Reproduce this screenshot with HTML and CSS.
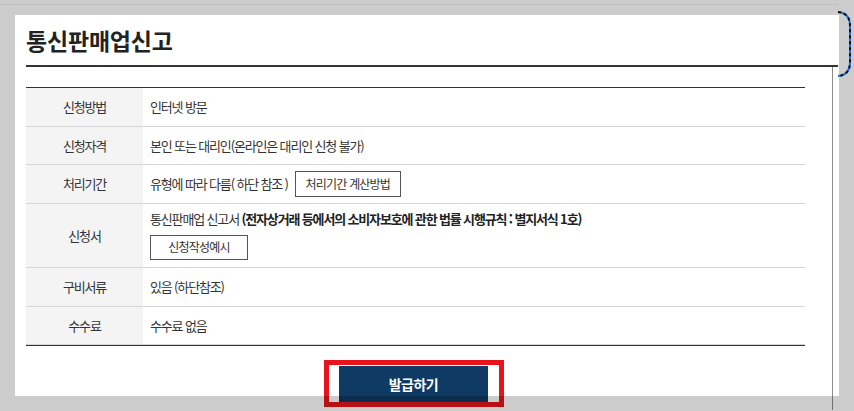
FILE: index.html
```html
<!DOCTYPE html>
<html lang="ko">
<head>
<meta charset="utf-8">
<title>통신판매업신고</title>
<link rel="stylesheet" href="styles.css">
</head>
<body>
<div class="topbar"></div>
<div class="page">
  <header class="head">
    <h1 class="title">통신판매업신고</h1>
  </header>
  <div class="sheet">
    <div class="info">
      <div class="row"><div class="th">신청방법</div><div class="td">인터넷 방문</div></div>
      <div class="row"><div class="th">신청자격</div><div class="td">본인 또는 대리인(온라인은 대리인 신청 불가)</div></div>
      <div class="row"><div class="th">처리기간</div><div class="td">유형에 따라 다름( 하단 참조 ) <button class="btn-outline btn-calc">처리기간 계산방법</button></div></div>
      <div class="row tall"><div class="th">신청서</div><div class="td stack"><p class="line">통신판매업 신고서 <strong>(전자상거래 등에서의 소비자보호에 관한 법률 시행규칙 : 별지서식 1호)</strong></p><button class="btn-outline btn-example">신청작성예시</button></div></div>
      <div class="row"><div class="th">구비서류</div><div class="td">있음 (하단참조)</div></div>
      <div class="row"><div class="th">수수료</div><div class="td">수수료 없음</div></div>
    </div>
    <div class="actions"><button class="btn-issue">발급하기</button></div>
  </div>
</div>
<div class="mark"></div>
<div class="spot"></div>
<svg class="focus-ring" width="20" height="72" viewBox="0 0 20 72">
  <path d="M2 2 Q14 3 14 16 L14 52 Q14 65 2 66" fill="none" stroke="#1f6fd8" stroke-width="2"/>
  <path d="M2 2 Q14 3 14 16 L14 52 Q14 65 2 66" fill="none" stroke="#111" stroke-width="2" stroke-dasharray="3 3"/>
</svg>
</body>
</html>
```
FILE: styles.css
```css
* { box-sizing: border-box; }
html, body { margin: 0; padding: 0; }
body {
  width: 854px;
  height: 411px;
  overflow: hidden;
  background: #fff;
  font-family: "Noto Sans CJK KR", "Noto Sans", sans-serif;
  color: #333;
}
.topbar {
  width: 838px;
  height: 5px;
  border-bottom: 1px solid #f2f2f2;
}
.head {
  margin-left: 26px;
  width: 812px;
  height: 62px;
  padding-top: 10px;
  display: flex;
  align-items: center;
  border-bottom: 2px solid #333;
}
.title {
  margin: 0;
  font-size: 23px;
  font-weight: 700;
  letter-spacing: -0.2px;
  color: #222;
  line-height: 30px;
}
.sheet {
  margin-left: 26px;
  width: 807px;
  height: 343px;
  padding-top: 20px;
  border-right: 1px solid #8c8c8c;
}
.info {
  width: 779px;
  border-top: 1px solid #333;
  border-bottom: 1px solid #333;
}
.row {
  display: grid;
  grid-template-columns: 117px 1fr;
  min-height: 38.5px;
  border-bottom: 1px solid #d5d5d5;
  font-size: 13px;
  letter-spacing: -1.15px;
}
.row.tall { min-height: 64.5px; }
.th {
  background: #f4f4f4;
  display: flex;
  align-items: center;
  justify-content: center;
  color: #333;
}
.td {
  display: flex;
  align-items: center;
  padding-left: 7px;
  color: #333;
}
.td.stack {
  flex-direction: column;
  align-items: flex-start;
  justify-content: flex-start;
  padding-top: 5px;
}
.line {
  margin: 0;
  line-height: 20px;
}
.line strong { color: #222; font-weight: 700; letter-spacing: -1.15px; }
.btn-outline {
  font-family: inherit;
  font-size: 12px;
  letter-spacing: -0.8px;
  color: #333;
  background: #fff;
  border: 1px solid #555;
  padding: 0;
  line-height: 1;
}
.btn-calc {
  margin-left: 7px;
  width: 106px;
  height: 26px;
}
.btn-example {
  margin-top: 6px;
  width: 98px;
  height: 25px;
}
.actions {
  width: 779px;
  display: flex;
  justify-content: center;
  padding-top: 20px;
  padding-right: 4px;
}
.btn-issue {
  width: 149px;
  height: 36px;
  border: 0;
  background: #0e3a63;
  color: #fff;
  font-family: inherit;
  font-size: 14px;
  font-weight: 700;
  letter-spacing: -0.5px;
}
.mark {
  position: absolute;
  left: 324px;
  top: 360px;
  width: 180px;
  height: 47px;
  border: 5px solid #e8141c;
}
.spot {
  position: absolute;
  left: 15px;
  top: 15px;
  width: 824px;
  height: 381px;
  box-shadow: 0 0 0 1200px rgba(0, 0, 0, 0.2);
  pointer-events: none;
}
.focus-ring {
  position: absolute;
  left: 836px;
  top: 10px;
}
```
